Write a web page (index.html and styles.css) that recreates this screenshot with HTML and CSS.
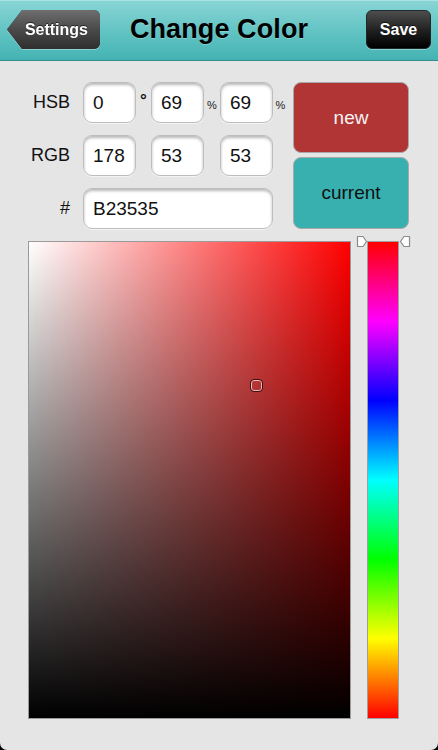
FILE: index.html
```html
<!DOCTYPE html>
<html>
<head>
<meta charset="utf-8">
<title>Change Color</title>
<link rel="stylesheet" href="styles.css">
</head>
<body>
<div class="app">
  <header class="navbar">
    <div class="back-wrap"><div class="back">Settings</div></div>
    <h1 class="title">Change Color</h1>
    <div class="save">Save</div>
  </header>
  <main class="content">
    <section class="top">
      <div class="form">
        <div class="row">
          <span class="label">HSB</span>
          <div class="field">0</div><span class="unit deg">°</span>
          <div class="field">69</div><span class="unit wide pct">%</span>
          <div class="field">69</div><span class="unit pct">%</span>
        </div>
        <div class="row">
          <span class="label">RGB</span>
          <div class="field">178</div><span class="unit"></span>
          <div class="field">53</div><span class="unit wide"></span>
          <div class="field">53</div>
        </div>
        <div class="row">
          <span class="label">#</span>
          <div class="field hex">B23535</div>
        </div>
      </div>
      <div class="swatches">
        <div class="swatch new">new</div>
        <div class="swatch current">current</div>
      </div>
    </section>
    <section class="picker">
      <div class="plane">
        <div class="cursor"></div>
      </div>
      <div class="hue">
        <svg class="mark mark-l" width="12" height="13" viewBox="0 0 12 13"><path d="M1.5 1.5 H7 L10.5 6.5 L7 11.5 H1.5 Z" fill="#fff" stroke="#8a8a8a" stroke-width="1.2" stroke-linejoin="round"/></svg>
        <svg class="mark mark-r" width="12" height="13" viewBox="0 0 12 13"><path d="M10.5 1.5 H5 L1.5 6.5 L5 11.5 H10.5 Z" fill="#fff" stroke="#8a8a8a" stroke-width="1.2" stroke-linejoin="round"/></svg>
      </div>
    </section>
  </main>
</div>
</body>
</html>
```
FILE: styles.css
```css
* { box-sizing: border-box; }
html, body { margin: 0; padding: 0; background: #000; }
body {
  width: 438px;
  height: 750px;
  font-family: "Liberation Sans", Arial, sans-serif;
  overflow: hidden;
}
.app {
  width: 438px;
  height: 750px;
  background: #e5e5e5;
  border-radius: 0 0 7px 7px;
  overflow: hidden;
}
.navbar {
  height: 61px;
  display: grid;
  grid-template-columns: 1fr auto 1fr;
  align-items: center;
  padding: 0 7px 1px 7px;
  background: linear-gradient(to bottom, #8ad5d5 0%, #64c4c4 50%, #44b3b3 100%);
  border-bottom: 1px solid #2f8f8f;
  box-shadow: inset 0 1px 0 #a8e2e2;
}
.back-wrap {
  justify-self: start;
  filter: drop-shadow(0 0 0.6px #1e3d3d) drop-shadow(0 1px 0 rgba(255,255,255,0.35));
}
.back {
  width: 93px;
  height: 39px;
  display: flex;
  align-items: center;
  justify-content: flex-end;
  padding-right: 12px;
  color: #fff;
  font-weight: bold;
  font-size: 16px;
  text-shadow: 0 -1px 0 rgba(0,0,0,0.6);
  background: linear-gradient(to bottom, #6e6e6e 0%, #4a4a4a 50%, #2e2e2e 100%);
  border-radius: 6px;
  clip-path: polygon(0 50%, 15px 0, 100% 0, 100% 100%, 15px 100%);
}
.title {
  margin: 0;
  font-size: 27px;
  font-weight: bold;
  color: #000;
  letter-spacing: 0.1px;
  text-shadow: 0 1px 0 rgba(255,255,255,0.25);
}
.save {
  justify-self: end;
  width: 65px;
  height: 39px;
  display: flex;
  align-items: center;
  justify-content: center;
  color: #fff;
  font-weight: bold;
  font-size: 16px;
  text-shadow: 0 -1px 0 rgba(0,0,0,0.6);
  background: linear-gradient(to bottom, #4e4e4e 0%, #222 50%, #000 100%);
  border: 1px solid #1c2a2a;
  border-radius: 6px;
  box-shadow: 0 1px 0 rgba(255,255,255,0.35);
}
.content {
  padding-top: 21px;
}
.top {
  display: flex;
  align-items: flex-start;
}
.form {
  display: flex;
  flex-direction: column;
  gap: 12px;
}
.row {
  display: flex;
  align-items: center;
  height: 41px;
}
.label {
  width: 70px;
  margin-right: 13px;
  text-align: right;
  font-size: 18px;
  color: #111;
}
.field {
  width: 53px;
  height: 41px;
  display: flex;
  align-items: center;
  padding-left: 9px;
  font-size: 19px;
  color: #111;
  background: #fff;
  border: 1px solid #bdbdbd;
  border-radius: 9px;
  box-shadow: inset 0 2px 3px rgba(0,0,0,0.28), 0 1px 0 rgba(255,255,255,0.6);
}
.field.hex { width: 190px; }
.unit {
  width: 15px;
  text-align: center;
  color: #111;
}
.unit.wide { width: 16px; }
.deg {
  font-size: 17px;
  font-weight: bold;
  margin-top: -4px;
}
.pct {
  font-size: 11px;
  margin-top: 4px;
  color: #222;
}
.swatches {
  margin-left: 5px;
  width: 116px;
  display: flex;
  flex-direction: column;
  gap: 4px;
}
.swatch {
  display: flex;
  align-items: center;
  justify-content: center;
  font-size: 19px;
  border: 1px solid #a9a9a9;
  border-radius: 8px;
}
.swatch.new {
  height: 71px;
  background: #b23535;
  color: #f4f4f4;
}
.swatch.current {
  height: 72px;
  background: #39b0b0;
  color: #111;
}
.picker {
  display: flex;
  gap: 16px;
  margin-top: 12px;
  padding-left: 28px;
}
.plane {
  position: relative;
  width: 323px;
  height: 478px;
  border: 1px solid #9a9a9a;
  background:
    linear-gradient(to top, #000 0%, rgba(0,0,0,0) 100%),
    linear-gradient(to right, #fff 0%, #f00 100%);
}
.cursor {
  position: absolute;
  left: 221px;
  top: 137px;
  width: 13px;
  height: 13px;
  border: 1px solid #3a1010;
  border-radius: 4px;
  box-shadow: inset 0 0 0 1px #f1b9b9;
}
.hue {
  position: relative;
  width: 32px;
  height: 478px;
  border: 1px solid #a0a0a0;
  background: linear-gradient(to bottom,
    #ff0000 0%, #ff00ff 16.7%, #0000ff 33.3%, #00ffff 50%,
    #00ff00 66.7%, #ffff00 83.3%, #ff0000 100%);
}
.mark {
  position: absolute;
  top: -7px;
}
.mark-l { left: -12px; }
.mark-r { right: -13px; }
```
